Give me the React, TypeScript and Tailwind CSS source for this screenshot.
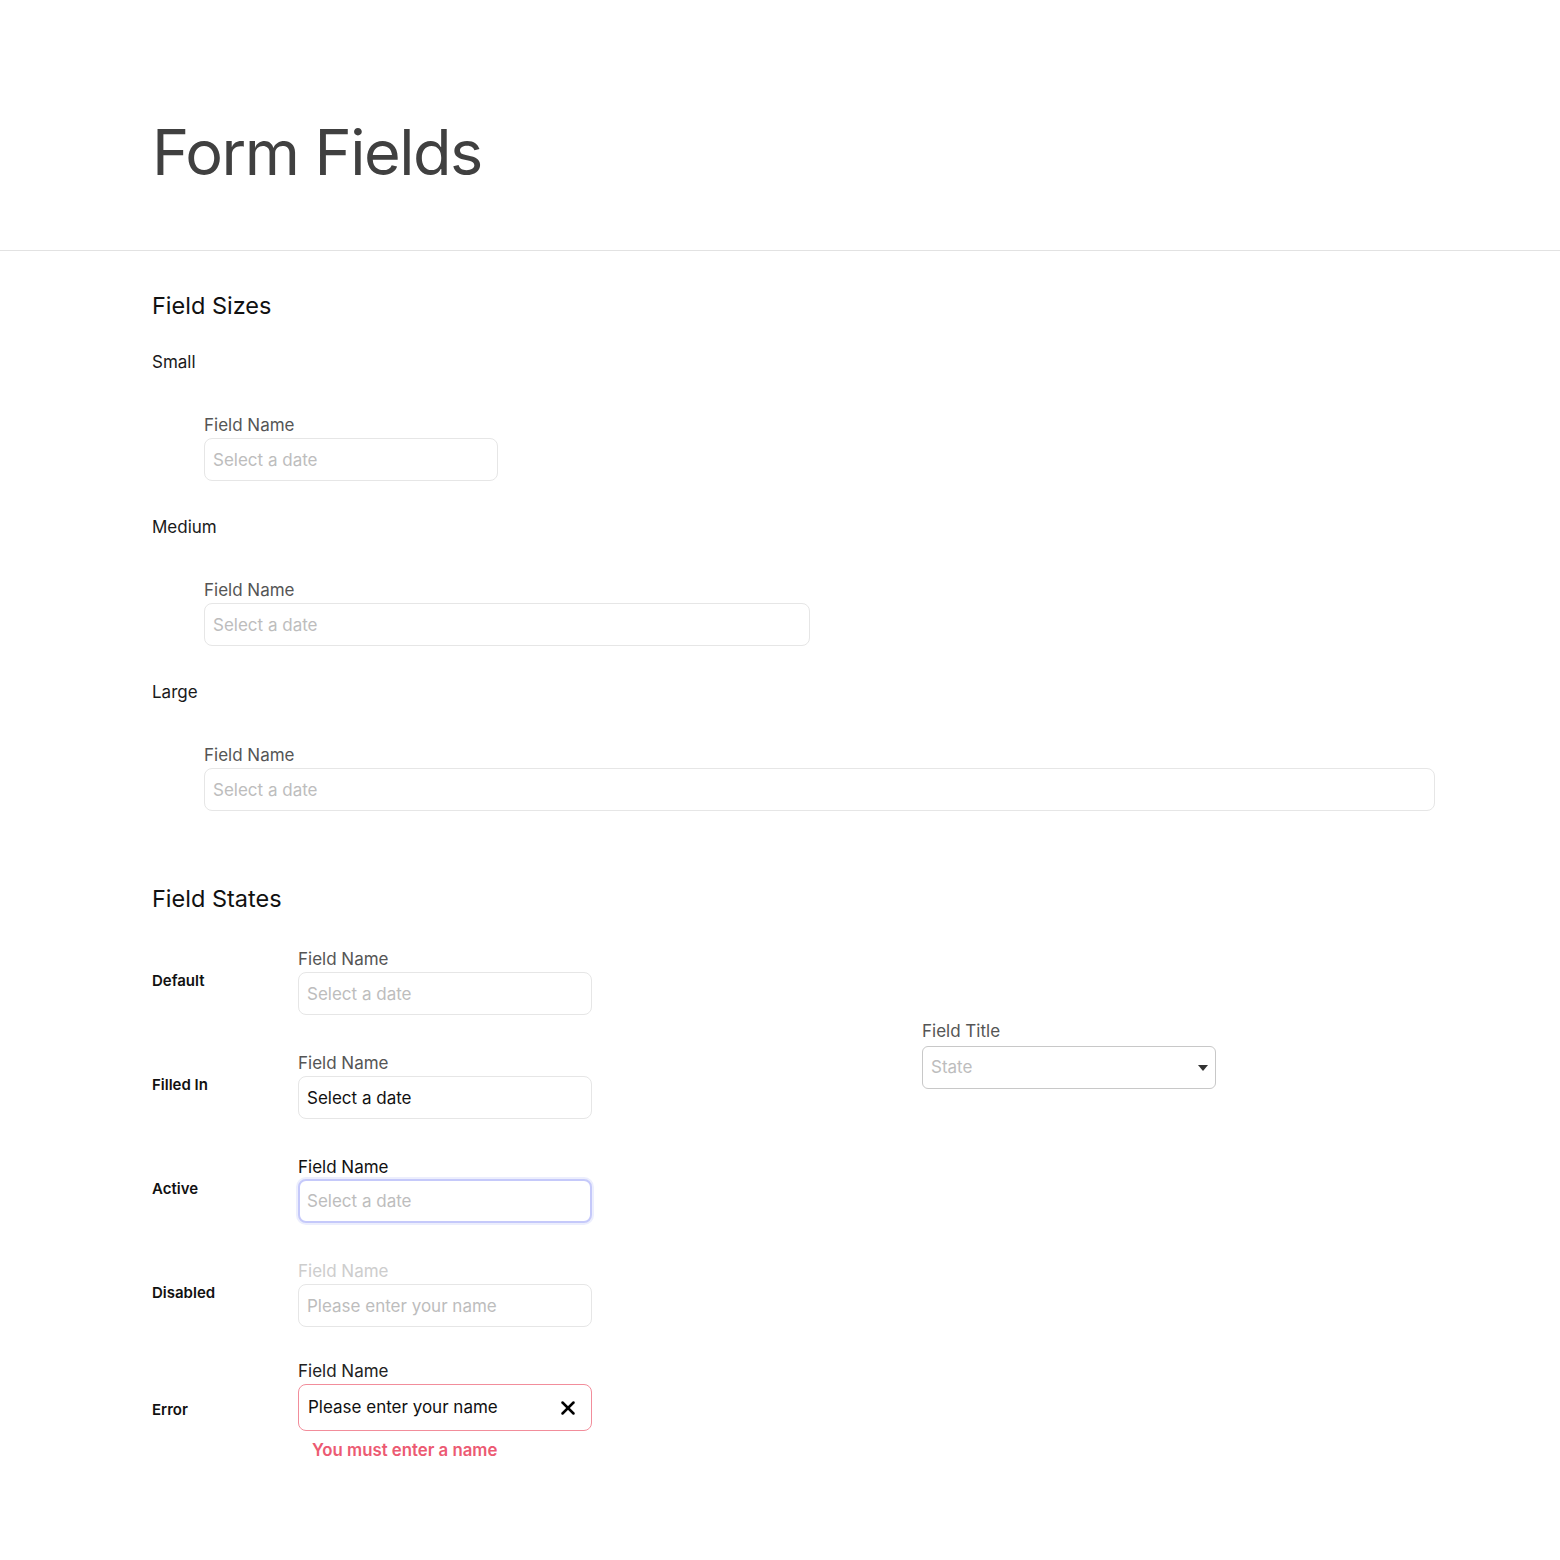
import { X } from 'lucide-react'

const inputBase =
  'h-[43px] w-full rounded-lg border border-[#e6e6e6] bg-white px-2 text-[17px] text-[#111] outline-none placeholder:text-[#bdbdbd]'

function SizeField({ label, width }: { label: string; width: string }) {
  return (
    <div className="flex flex-col gap-[39px]">
      <div className="text-[17px] leading-6 text-[#1a1a1a]">{label}</div>
      <div className={`ml-[52px] flex flex-col gap-px ${width}`}>
        <label className="text-[17px] leading-6 text-[#555]">Field Name</label>
        <input readOnly placeholder="Select a date" className={inputBase} />
      </div>
    </div>
  )
}

function StateRow({ label, children, className = '' }: { label: string; children: React.ReactNode; className?: string }) {
  return (
    <div className={`flex items-center ${className}`}>
      <div className="w-[146px] shrink-0 text-[15px] font-semibold text-[#111]">{label}</div>
      <div className="w-[294px]">{children}</div>
    </div>
  )
}

export default function App() {
  return (
    <div className="min-h-screen bg-white font-['Inter',sans-serif] text-[#111]">
      <header className="border-b border-[#e2e2e2] px-[152px] pb-[66px] pt-[121px]">
        <h1 className="text-[63px] leading-none tracking-[-1.5px] text-[#404040]">Form Fields</h1>
      </header>

      <main className="px-[152px] pb-24">
        {/* Sizes */}
        <section className="pt-[39px]">
          <h2 className="text-[23.5px] leading-8 text-[#111]">Field Sizes</h2>
          <div className="mt-[28px] flex flex-col gap-[34px]">
            <SizeField label="Small" width="w-[294px]" />
            <SizeField label="Medium" width="w-[606px]" />
            <SizeField label="Large" width="w-[1231px]" />
          </div>
        </section>

        {/* States */}
        <section className="pt-[72px]">
          <h2 className="text-[23.5px] leading-8 text-[#111]">Field States</h2>
          <div className="mt-8 flex">
            <div className="flex w-[440px] flex-col gap-[36px]">
              <StateRow label="Default">
                <div className="flex flex-col gap-px">
                  <label className="text-[17px] leading-6 text-[#555]">Field Name</label>
                  <input readOnly placeholder="Select a date" className={inputBase} />
                </div>
              </StateRow>

              <StateRow label="Filled In">
                <div className="flex flex-col gap-px">
                  <label className="text-[17px] leading-6 text-[#555]">Field Name</label>
                  <input readOnly value="Select a date" className={inputBase} />
                </div>
              </StateRow>

              <StateRow label="Active">
                <div className="flex flex-col">
                  <label className="text-[17px] leading-6 text-[#111]">Field Name</label>
                  <input
                    readOnly
                    placeholder="Select a date"
                    className="h-[44px] w-full rounded-lg border-2 border-[#c5c9fa] bg-white px-[7px] text-[17px] outline-none shadow-[0_0_0_2px_#eceefd] placeholder:text-[#bdbdbd]"
                  />
                </div>
              </StateRow>

              <StateRow label="Disabled">
                <div className="flex flex-col gap-px">
                  <label className="text-[17px] leading-6 text-[#cdcdcd]">Field Name</label>
                  <input disabled placeholder="Please enter your name" className={inputBase} />
                </div>
              </StateRow>

              <StateRow label="Error" className="-mt-1">
                <div className="flex flex-col gap-px">
                  <label className="text-[17px] leading-6 text-[#222]">Field Name</label>
                  <div className="flex h-[47px] items-center justify-between rounded-lg border border-[#f28d9b] bg-white pl-[9px] pr-[12px]">
                    <span className="text-[17px] text-[#111]">Please enter your name</span>
                    <X className="h-[22px] w-[22px] text-black" strokeWidth={2.75} />
                  </div>
                  <p className="mt-[6px] pl-[14px] text-[16.8px] font-semibold leading-6 text-[#ec5a72]">
                    You must enter a name
                  </p>
                </div>
              </StateRow>
            </div>

            <div className="ml-[330px] mt-[72px] flex w-[294px] flex-col gap-[3px]">
              <label className="text-[17px] leading-6 text-[#555]">Field Title</label>
              <div className="flex h-[43px] items-center justify-between rounded-md border border-[#c8c8c8] bg-white pl-2 pr-[7px]">
                <span className="text-[17px] text-[#bdbdbd]">State</span>
                <svg width="10" height="6" viewBox="0 0 10 6">
                  <path d="M0 0h10L5 6z" fill="#333" />
                </svg>
              </div>
            </div>
          </div>
        </section>
      </main>
    </div>
  )
}
